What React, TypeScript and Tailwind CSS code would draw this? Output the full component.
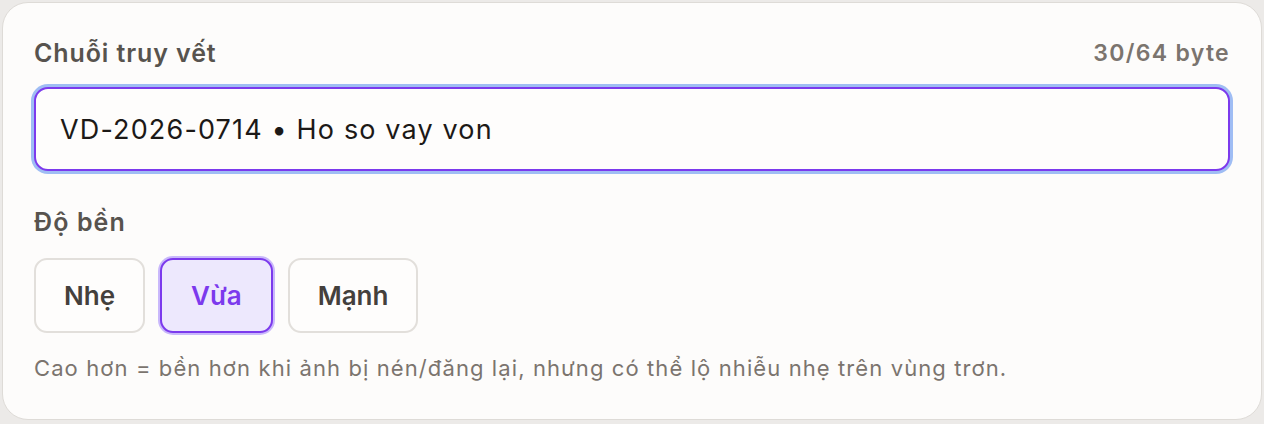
import React, { useState } from 'react';

const levels = ['Nhẹ', 'Vừa', 'Mạnh'];

const App: React.FC = () => {
  const [value, setValue] = useState('VD-2026-0714 • Ho so vay von');
  const [level, setLevel] = useState('Vừa');

  return (
    <div className="min-h-screen bg-[#eceae8] p-[2px] font-['Inter','Noto_Sans',sans-serif]">
      <div className="rounded-[26px] border border-[#dedbd7] bg-[#fdfcfb] px-[31px] pt-[34px] pb-[36px]">
        <div className="flex items-center justify-between">
          <span className="text-[25px] leading-[32px] font-semibold tracking-[0.9px] text-[#57534e]">Chuỗi truy vết</span>
          <span className="text-[23px] leading-[32px] font-semibold tracking-[1.3px] text-[#7b746e]">30/64 byte</span>
        </div>
        <input
          value={value}
          onChange={(e) => setValue(e.target.value)}
          className="mt-[18px] h-[84px] w-full rounded-[14px] border-2 border-[#7c3aed] bg-[#fefdfc] px-[24px] text-[27px] tracking-[1.15px] text-[#1c1917] outline-none ring-[3px] ring-[#9fbdf4]"
        />
        <div className="mt-[35px] text-[25px] leading-[32px] font-semibold tracking-[1.1px] text-[#57534e]">Độ bền</div>
        <div className="mt-[20px] flex gap-[15px]">
          {levels.map((l) => {
            const active = l === level;
            return (
              <button
                key={l}
                onClick={() => setLevel(l)}
                className={
                  active
                    ? 'h-[75px] rounded-[13px] border-2 border-[#7c3aed] bg-[#ede8fd] px-[29px] text-[26px] font-semibold text-[#7c3aed] ring-2 ring-[#c9b8fb]'
                    : 'h-[75px] rounded-[13px] border-2 border-[#e2dfdb] bg-[#fefdfc] px-[28px] text-[26px] font-semibold text-[#44403c]'
                }
              >
                {l}
              </button>
            );
          })}
        </div>
        <p className="mt-[20px] text-[22px] leading-[30px] tracking-[1.1px] text-[#7b746e]">
          Cao hơn = bền hơn khi ảnh bị nén/đăng lại, nhưng có thể lộ nhiễu nhẹ trên vùng trơn.
        </p>
      </div>
    </div>
  );
};

export default App;
